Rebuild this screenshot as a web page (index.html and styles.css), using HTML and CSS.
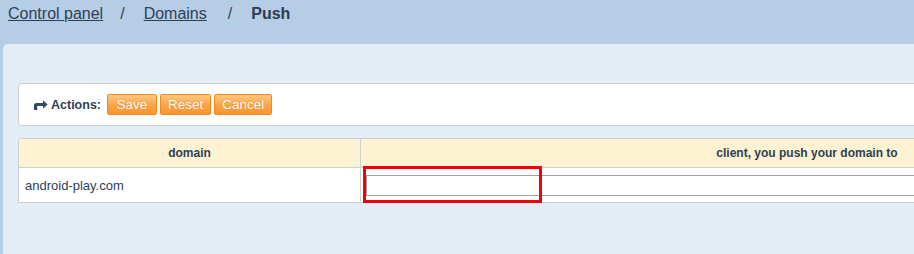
FILE: index.html
```html
<!DOCTYPE html>
<html>
<head>
<meta charset="utf-8">
<link rel="stylesheet" href="styles.css">
</head>
<body>
<nav class="crumbs">
  <a href="#">Control panel</a>
  <span class="sep sep1">/</span>
  <a href="#">Domains</a>
  <span class="sep sep2">/</span>
  <strong>Push</strong>
</nav>
<main class="panel">
  <div class="actions">
    <svg class="arrow" width="14" height="10" viewBox="0 0 14 10"><path d="M0 10V5.5C0 3.8 1 3 2.7 3H9V0.2L13.6 4.5L9 8.8V6H3.2V10Z" fill="#2f4a68"/></svg>
    <span class="label">Actions:</span>
    <div class="btns">
      <button class="btn">Save</button>
      <button class="btn">Reset</button>
      <button class="btn">Cancel</button>
    </div>
  </div>
  <table class="grid">
    <thead>
      <tr><th class="c1">domain</th><th class="c2">client, you push your domain to</th></tr>
    </thead>
    <tbody>
      <tr><td class="c1">android-play.com</td><td class="c2 inputcell"><input class="field" type="text"><span class="mark"></span></td></tr>
    </tbody>
  </table>
</main>
</body>
</html>
```
FILE: styles.css
```css
html, body {
  margin: 0;
  padding: 0;
  overflow: hidden;
}
body {
  width: 914px;
  height: 254px;
  background: #b5cee5;
  font-family: "Liberation Sans", Arial, sans-serif;
  color: #2f3e55;
}
.crumbs {
  height: 44px;
  box-sizing: border-box;
  padding: 4px 0 0 8px;
  font-size: 16px;
  line-height: 20px;
  display: flex;
  align-items: baseline;
}
.crumbs a {
  color: #2f3e55;
  text-decoration: underline;
}
.crumbs .sep {
  color: #2f3e55;
}
.crumbs .sep1 {
  margin: 0 19px 0 17px;
}
.crumbs .sep2 {
  margin: 0 19px 0 21px;
}
.crumbs strong {
  color: #2c3b52;
}
.panel {
  margin-left: 3px;
  background: #e4ecf6;
  border-top-left-radius: 5px;
  height: 210px;
  padding: 39px 0 0 15px;
  box-sizing: border-box;
}
.actions {
  width: 1200px;
  height: 43px;
  box-sizing: border-box;
  background: #fff;
  border: 1px solid #c9ccd0;
  border-radius: 4px;
  display: flex;
  align-items: center;
  padding-left: 15px;
}
.arrow {
  margin-right: 3px;
}
.label {
  font-size: 12.5px;
  font-weight: bold;
  color: #2f3e55;
  margin-right: 6px;
}
.btns {
  display: flex;
  gap: 3px;
}
.btn {
  height: 21px;
  min-width: 50px;
  padding: 0 7px;
  font-family: "Liberation Sans", Arial, sans-serif;
  font-size: 13.5px;
  color: #fff;
  text-shadow: 0 0 1px rgba(190, 90, 0, 0.6);
  background: linear-gradient(#fec983, #fca247 55%, #fb962f);
  border: 1px solid #f4861c;
  border-radius: 2px;
  line-height: 19px;
}
.grid {
  margin-top: 12px;
  width: 1236px;
  table-layout: fixed;
  border-collapse: separate;
  border-spacing: 0;
  border: 1px solid #c9ccd0;
  border-radius: 4px 0 0 0;
  background: #fff;
}
.grid th,
.grid td {
  box-sizing: border-box;
}
.grid th {
  height: 29px;
  padding: 0;
  background: #fdf3d3;
  font-size: 12px;
  font-weight: bold;
  color: #2f3e55;
  border-bottom: 1px solid #d0d0d0;
}
.grid th.c1 {
  border-top-left-radius: 3px;
}
.grid .c1 {
  width: 342px;
  border-right: 1px solid #d0d0d0;
}
.grid td {
  height: 34px;
  padding: 0 6px;
  font-size: 13px;
  color: #2f3e55;
}
.grid td.inputcell {
  position: relative;
  padding: 0 0 0 5px;
}
.field {
  display: block;
  width: 100%;
  height: 21px;
  box-sizing: border-box;
  border: 1px solid #a3a3a3;
  padding: 0;
  margin: 0;
}
.mark {
  position: absolute;
  left: 2px;
  top: -2px;
  width: 179px;
  height: 37px;
  box-sizing: border-box;
  border: 3px solid #f3000c;
}
```
